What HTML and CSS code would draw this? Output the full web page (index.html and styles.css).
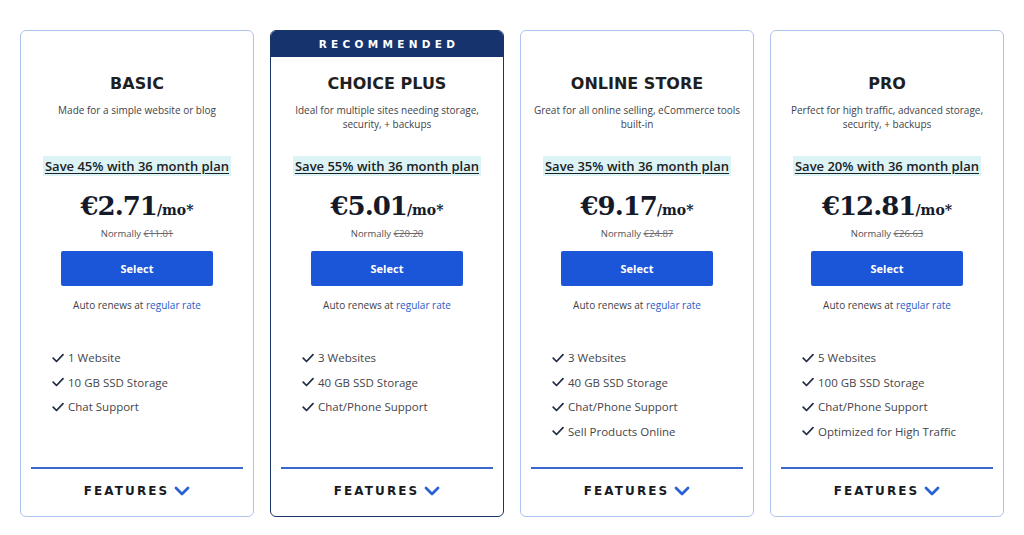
FILE: index.html
```html
<!DOCTYPE html>
<html lang="en">
<head>
<meta charset="utf-8">
<title>Plans</title>
<link rel="stylesheet" href="styles.css">
</head>
<body>
<main class="plans">
  <section class="card">
    <div class="ribbon"></div>
    <h2 class="title">BASIC</h2>
    <p class="subtitle">Made for a simple website or blog</p>
    <p class="save"><span>Save 45% with 36 month plan</span></p>
    <p class="price">€2.71<span class="per">/mo*</span></p>
    <p class="normally">Normally <s>€11.01</s></p>
    <button class="select">Select</button>
    <p class="renew">Auto renews at <a href="#">regular rate</a></p>
    <ul class="features">
      <li><svg class="check" viewBox="0 0 12 10" width="12" height="10"><path d="M1.2 5.2l3.3 3.3L11 1.6" fill="none" stroke="#1f2a44" stroke-width="1.7" stroke-linecap="round" stroke-linejoin="round"/></svg>1 Website</li>
      <li><svg class="check" viewBox="0 0 12 10" width="12" height="10"><path d="M1.2 5.2l3.3 3.3L11 1.6" fill="none" stroke="#1f2a44" stroke-width="1.7" stroke-linecap="round" stroke-linejoin="round"/></svg>10 GB SSD Storage</li>
      <li><svg class="check" viewBox="0 0 12 10" width="12" height="10"><path d="M1.2 5.2l3.3 3.3L11 1.6" fill="none" stroke="#1f2a44" stroke-width="1.7" stroke-linecap="round" stroke-linejoin="round"/></svg>Chat Support</li>
    </ul>
    <div class="foot"><span>FEATURES</span><svg class="chev" viewBox="0 0 16 10" width="16" height="10"><path d="M2 2l6 6 6-6" fill="none" stroke="#2a62d4" stroke-width="2.8" stroke-linecap="round" stroke-linejoin="round"/></svg></div>
  </section>
  <section class="card rec">
    <div class="ribbon">RECOMMENDED</div>
    <h2 class="title">CHOICE PLUS</h2>
    <p class="subtitle">Ideal for multiple sites needing storage, security, + backups</p>
    <p class="save"><span>Save 55% with 36 month plan</span></p>
    <p class="price">€5.01<span class="per">/mo*</span></p>
    <p class="normally">Normally <s>€20.20</s></p>
    <button class="select">Select</button>
    <p class="renew">Auto renews at <a href="#">regular rate</a></p>
    <ul class="features">
      <li><svg class="check" viewBox="0 0 12 10" width="12" height="10"><path d="M1.2 5.2l3.3 3.3L11 1.6" fill="none" stroke="#1f2a44" stroke-width="1.7" stroke-linecap="round" stroke-linejoin="round"/></svg>3 Websites</li>
      <li><svg class="check" viewBox="0 0 12 10" width="12" height="10"><path d="M1.2 5.2l3.3 3.3L11 1.6" fill="none" stroke="#1f2a44" stroke-width="1.7" stroke-linecap="round" stroke-linejoin="round"/></svg>40 GB SSD Storage</li>
      <li><svg class="check" viewBox="0 0 12 10" width="12" height="10"><path d="M1.2 5.2l3.3 3.3L11 1.6" fill="none" stroke="#1f2a44" stroke-width="1.7" stroke-linecap="round" stroke-linejoin="round"/></svg>Chat/Phone Support</li>
    </ul>
    <div class="foot"><span>FEATURES</span><svg class="chev" viewBox="0 0 16 10" width="16" height="10"><path d="M2 2l6 6 6-6" fill="none" stroke="#2a62d4" stroke-width="2.8" stroke-linecap="round" stroke-linejoin="round"/></svg></div>
  </section>
  <section class="card">
    <div class="ribbon"></div>
    <h2 class="title">ONLINE STORE</h2>
    <p class="subtitle">Great for all online selling, eCommerce tools built-in</p>
    <p class="save"><span>Save 35% with 36 month plan</span></p>
    <p class="price">€9.17<span class="per">/mo*</span></p>
    <p class="normally">Normally <s>€24.87</s></p>
    <button class="select">Select</button>
    <p class="renew">Auto renews at <a href="#">regular rate</a></p>
    <ul class="features">
      <li><svg class="check" viewBox="0 0 12 10" width="12" height="10"><path d="M1.2 5.2l3.3 3.3L11 1.6" fill="none" stroke="#1f2a44" stroke-width="1.7" stroke-linecap="round" stroke-linejoin="round"/></svg>3 Websites</li>
      <li><svg class="check" viewBox="0 0 12 10" width="12" height="10"><path d="M1.2 5.2l3.3 3.3L11 1.6" fill="none" stroke="#1f2a44" stroke-width="1.7" stroke-linecap="round" stroke-linejoin="round"/></svg>40 GB SSD Storage</li>
      <li><svg class="check" viewBox="0 0 12 10" width="12" height="10"><path d="M1.2 5.2l3.3 3.3L11 1.6" fill="none" stroke="#1f2a44" stroke-width="1.7" stroke-linecap="round" stroke-linejoin="round"/></svg>Chat/Phone Support</li>
      <li><svg class="check" viewBox="0 0 12 10" width="12" height="10"><path d="M1.2 5.2l3.3 3.3L11 1.6" fill="none" stroke="#1f2a44" stroke-width="1.7" stroke-linecap="round" stroke-linejoin="round"/></svg>Sell Products Online</li>
    </ul>
    <div class="foot"><span>FEATURES</span><svg class="chev" viewBox="0 0 16 10" width="16" height="10"><path d="M2 2l6 6 6-6" fill="none" stroke="#2a62d4" stroke-width="2.8" stroke-linecap="round" stroke-linejoin="round"/></svg></div>
  </section>
  <section class="card">
    <div class="ribbon"></div>
    <h2 class="title">PRO</h2>
    <p class="subtitle">Perfect for high traffic, advanced storage, security, + backups</p>
    <p class="save"><span>Save 20% with 36 month plan</span></p>
    <p class="price">€12.81<span class="per">/mo*</span></p>
    <p class="normally">Normally <s>€26.63</s></p>
    <button class="select">Select</button>
    <p class="renew">Auto renews at <a href="#">regular rate</a></p>
    <ul class="features">
      <li><svg class="check" viewBox="0 0 12 10" width="12" height="10"><path d="M1.2 5.2l3.3 3.3L11 1.6" fill="none" stroke="#1f2a44" stroke-width="1.7" stroke-linecap="round" stroke-linejoin="round"/></svg>5 Websites</li>
      <li><svg class="check" viewBox="0 0 12 10" width="12" height="10"><path d="M1.2 5.2l3.3 3.3L11 1.6" fill="none" stroke="#1f2a44" stroke-width="1.7" stroke-linecap="round" stroke-linejoin="round"/></svg>100 GB SSD Storage</li>
      <li><svg class="check" viewBox="0 0 12 10" width="12" height="10"><path d="M1.2 5.2l3.3 3.3L11 1.6" fill="none" stroke="#1f2a44" stroke-width="1.7" stroke-linecap="round" stroke-linejoin="round"/></svg>Chat/Phone Support</li>
      <li><svg class="check" viewBox="0 0 12 10" width="12" height="10"><path d="M1.2 5.2l3.3 3.3L11 1.6" fill="none" stroke="#1f2a44" stroke-width="1.7" stroke-linecap="round" stroke-linejoin="round"/></svg>Optimized for High Traffic</li>
    </ul>
    <div class="foot"><span>FEATURES</span><svg class="chev" viewBox="0 0 16 10" width="16" height="10"><path d="M2 2l6 6 6-6" fill="none" stroke="#2a62d4" stroke-width="2.8" stroke-linecap="round" stroke-linejoin="round"/></svg></div>
  </section>
</main>
</body>
</html>
```

FILE: styles.css
```css
* { box-sizing: border-box; }
html, body { margin: 0; padding: 0; background: #fff; }
body {
  font-family: "Open Sans", "DejaVu Sans", sans-serif;
  color: #2b2b2b;
  width: 1024px;
  height: 535px;
  overflow: hidden;
}
.plans {
  display: flex;
  gap: 16px;
  padding: 30px 20px 0;
}
.card {
  width: 234px;
  height: 487px;
  border: 1px solid #aec4ee;
  border-radius: 6px;
  display: flex;
  flex-direction: column;
  align-items: center;
  text-align: center;
  overflow: hidden;
}
.card.rec {
  border: 1.5px solid #1b3468;
}
.ribbon {
  align-self: stretch;
  height: 26px;
  flex: none;
}
.rec .ribbon {
  background: #16336e;
  color: #fff;
  font-family: "DejaVu Sans", sans-serif;
  font-weight: 700;
  font-size: 10.5px;
  letter-spacing: 4.3px;
  line-height: 26px;
  padding-left: 4px;
}
.title {
  margin: 17px 0 0;
  font-family: "DejaVu Sans", sans-serif;
  font-size: 16px;
  line-height: 20px;
  font-weight: 700;
  color: #1f1f22;
}
.subtitle {
  margin: 9px 0 0;
  padding: 0 10px;
  min-height: 28px;
  font-size: 10px;
  line-height: 14px;
  color: #434348;
}
.save {
  margin: 26px 0 0;
  font-size: 13px;
  line-height: 18px;
  font-weight: 600;
  color: #202124;
}
.save span {
  background: #ddf4f7;
  text-decoration: underline;
  text-underline-offset: 2px;
  padding: 1px 2px;
}
.price {
  margin: 16px 0 0;
  font-family: "DejaVu Serif", serif;
  font-weight: 700;
  font-size: 26px;
  line-height: 30px;
  color: #151a2a;
  letter-spacing: -1px;
}
.per {
  font-size: 14px;
  letter-spacing: 0;
}
.normally {
  margin: 2px 0 0;
  font-size: 9.5px;
  line-height: 14px;
  color: #505055;
}
.normally s { color: #6a6a70; }
.select {
  margin-top: 10px;
  width: 152px;
  height: 35px;
  border: none;
  border-radius: 2px;
  background: #1b55d8;
  color: #fff;
  font-family: "Open Sans", sans-serif;
  font-weight: 700;
  font-size: 11px;
  cursor: pointer;
}
.renew {
  margin: 12px 0 0;
  font-size: 10px;
  line-height: 14px;
  color: #3f3f44;
}
.renew a { color: #1f5cc8; text-decoration: none; }
.features {
  list-style: none;
  margin: 34px 0 0;
  padding: 0 0 0 31px;
  align-self: stretch;
  text-align: left;
}
.features li {
  height: 24.5px;
  line-height: 24.5px;
  font-size: 11.5px;
  color: #45454b;
  display: flex;
  align-items: center;
}
.check {
  flex: none;
  margin: -1px 4px 0 0;
}
.foot {
  margin-top: auto;
  align-self: stretch;
  margin-left: 10px;
  margin-right: 10px;
  border-top: 2px solid #3a68cf;
  height: 49px;
  display: flex;
  align-items: center;
  justify-content: center;
  gap: 5px;
  padding-bottom: 3px;
}
.foot span {
  font-family: "DejaVu Sans", sans-serif;
  font-weight: 700;
  font-size: 12px;
  letter-spacing: 2.1px;
  color: #1a1a1e;
}
.chev { display: block; }
```
